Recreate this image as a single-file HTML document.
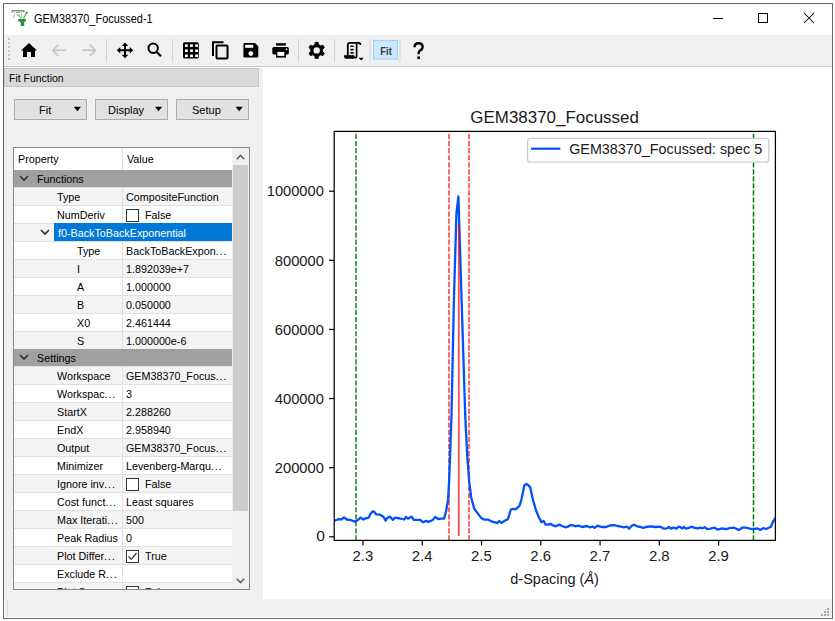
<!DOCTYPE html>
<html><head><meta charset="utf-8"><style>
*{margin:0;padding:0;box-sizing:border-box}
html,body{width:835px;height:621px;overflow:hidden;background:#fff;font-family:"Liberation Sans",sans-serif;}
.a{position:absolute}
#win{position:absolute;left:3px;top:3px;width:830px;height:616px;border:1px solid #686868;background:#f0f0f0}
#title{position:absolute;left:4px;top:4px;width:828px;height:31px;background:#fff}
#ttext{position:absolute;left:34px;top:10px;font-size:12px;line-height:18px;color:#000;white-space:nowrap;transform:scaleX(0.912);transform-origin:0 0}
.tb{position:absolute;background:#000}
#hdr{position:absolute;left:4px;top:68px;width:255px;height:19px;background:#dadada;border:1px solid #c6c6c6}
#hdrt{position:absolute;left:9px;top:69px;font-size:11px;line-height:18px;white-space:nowrap;transform:scaleX(0.95);transform-origin:0 0}
.btn{position:absolute;top:99px;width:73px;height:21px;background:#e1e1e1;border:1px solid #adadad}
.btnt{position:absolute;top:101px;font-size:11px;line-height:19px;white-space:nowrap}
.tri{position:absolute;width:0;height:0;border-left:3.6px solid transparent;border-right:3.6px solid transparent;border-top:3.7px solid #000}
#tree{position:absolute;left:13px;top:147px;width:237px;height:443px;border:1px solid #828790;background:#fff;overflow:hidden}
#tv{position:absolute;left:0;top:0;width:218px;height:441px;overflow:hidden}
.row{position:absolute;left:0;width:218px;height:18px;border-top:1px solid #e0e0e0}
.grp{position:absolute;left:0;width:218px;height:17px;background:#a0a0a0}
.sel{position:absolute;left:40px;width:178px;height:18px;background:#0078d7}
.t{position:absolute;font-size:11.5px;line-height:18px;white-space:nowrap;color:#000;transform:scaleX(0.935);transform-origin:0 0}
.chev{position:absolute}
.cb{position:absolute}
#coldiv{position:absolute;left:108px;top:0;width:1px;height:441px;background:#e0e0e0}
#sb{position:absolute;left:218px;top:0;width:17px;height:441px;background:#f0f0f0}
#thumb{position:absolute;left:1px;top:17px;width:15px;height:346px;background:#cdcdcd}
#canvas{position:absolute;left:263px;top:67px;width:569px;height:532px;background:#fff}
#status{position:absolute;left:4px;top:599px;width:828px;height:19px;background:#f0f0f0}
.tk{font-family:"Liberation Sans",sans-serif;font-size:14.2px;fill:#1a1a1a}
.ttl{font-family:"Liberation Sans",sans-serif;font-size:17px;fill:#1a1a1a}
.fitt{font-family:"Liberation Sans",sans-serif;font-size:11px;font-weight:bold;fill:#3a3a3a}
.help{font-family:"Liberation Sans",sans-serif;font-size:22px;font-weight:bold;fill:#000}
</style></head><body>
<div id="win"></div>
<div id="title"></div>
<svg class="a" style="left:10px;top:8px" width="20" height="20" viewBox="10 8 20 20">
<path d="M12.3 12.5 L12.3 10.8 L23.8 10.8 L23.8 12.5" stroke="#8c8c8c" stroke-width="1.4" fill="none"/>
<path d="M16 12.4 L19.8 12.4" stroke="#9a9a9a" stroke-width="1"/>
<path d="M14.3 12 L14.3 13.3 M21.6 12 L21.6 13.3" stroke="#aaa" stroke-width="0.9"/>
<path d="M14.8 14.2 Q13.3 15.5 13.6 17.6 M21.4 14.2 L22.2 17.6" stroke="#b0b0b0" stroke-width="1.1" fill="none"/>
<path d="M16.8 14.3 Q19.6 15.3 21.2 18.5" stroke="#58b058" stroke-width="1.1" fill="none"/>
<path d="M27.6 12.2 Q25 14 23.6 18.5" stroke="#4aa64a" stroke-width="1.2" fill="none"/>
<ellipse cx="26.6" cy="12.6" rx="1.2" ry="0.8" fill="#3c9c3c"/>
<path d="M18 19.1 L26.1 19.1 L25.6 21.4 L24.2 22 L24.2 26 L20.7 26 L20.7 22 L18.6 21.4 Z" fill="#2f8c3c"/>
</svg>
<div id="ttext">GEM38370_Focussed-1</div>
<svg class="a" style="left:700px;top:8px" width="125" height="20" viewBox="700 8 125 20">
<path d="M713 18.5 L723 18.5" stroke="#000" stroke-width="1"/>
<rect x="758.5" y="13.5" width="9" height="9" fill="none" stroke="#000" stroke-width="1"/>
<path d="M804 13 L814 23 M814 13 L804 23" stroke="#000" stroke-width="1.05"/>
</svg>
<svg style="position:absolute;left:4px;top:35px" width="827" height="31" viewBox="4 35 827 31">
<rect x="8" y="38" width="2" height="2" fill="#c4c4c4"/>
<rect x="8" y="42" width="2" height="2" fill="#c4c4c4"/>
<rect x="8" y="46" width="2" height="2" fill="#c4c4c4"/>
<rect x="8" y="50" width="2" height="2" fill="#c4c4c4"/>
<rect x="8" y="54" width="2" height="2" fill="#c4c4c4"/>
<rect x="8" y="58" width="2" height="2" fill="#c4c4c4"/>
<path d="M29 43 L37 50.5 L35 50.5 L35 57 L31 57 L31 52 L27 52 L27 57 L23 57 L23 50.5 L21 50.5 Z" fill="#000"/>
<path d="M66 50.3 L53 50.3 M58.5 44.5 L52.7 50.3 L58.5 56.1" fill="none" stroke="#c3c3c3" stroke-width="1.5"/>
<path d="M82 50.3 L95 50.3 M89.5 44.5 L95.3 50.3 L89.5 56.1" fill="none" stroke="#c3c3c3" stroke-width="1.5"/>
<line x1="106.5" y1="39" x2="106.5" y2="62" stroke="#d4d4d4" stroke-width="1"/>
<line x1="172.5" y1="39" x2="172.5" y2="62" stroke="#d4d4d4" stroke-width="1"/>
<line x1="298.5" y1="39" x2="298.5" y2="62" stroke="#d4d4d4" stroke-width="1"/>
<line x1="334.5" y1="39" x2="334.5" y2="62" stroke="#d4d4d4" stroke-width="1"/>
<line x1="370" y1="39" x2="370" y2="62" stroke="#d4d4d4" stroke-width="1"/>
<line x1="400" y1="39" x2="400" y2="62" stroke="#d4d4d4" stroke-width="1"/>
<path d="M125 51 M125 45 L125 56 M119.5 50.3 L130.5 50.3" stroke="#000" stroke-width="2" fill="none"/>
<path d="M125 42.5 L128.3 46 L121.7 46 Z M125 58.2 L128.3 54.7 L121.7 54.7 Z M116.8 50.3 L120.3 47 L120.3 53.6 Z M133.2 50.3 L129.7 47 L129.7 53.6 Z" fill="#000"/>
<circle cx="153.2" cy="48.3" r="4.7" fill="none" stroke="#000" stroke-width="2"/><path d="M156.5 51.8 L161 56.3" stroke="#000" stroke-width="2.2"/>
<rect x="183" y="42.2" width="15.8" height="16.4" rx="1.5" fill="#000"/>
<rect x="185.0" y="44.3" width="2.8" height="2.6" fill="#fff"/>
<rect x="185.0" y="49.4" width="2.8" height="2.6" fill="#fff"/>
<rect x="185.0" y="54.5" width="2.8" height="2.6" fill="#fff"/>
<rect x="190.1" y="44.3" width="2.8" height="2.6" fill="#fff"/>
<rect x="190.1" y="49.4" width="2.8" height="2.6" fill="#fff"/>
<rect x="190.1" y="54.5" width="2.8" height="2.6" fill="#fff"/>
<rect x="195.2" y="44.3" width="2.8" height="2.6" fill="#fff"/>
<rect x="195.2" y="49.4" width="2.8" height="2.6" fill="#fff"/>
<rect x="195.2" y="54.5" width="2.8" height="2.6" fill="#fff"/>
<path d="M213 56 L213 42.3 L223.5 42.3" fill="none" stroke="#000" stroke-width="2"/>
<rect x="216.5" y="45.5" width="11" height="13" rx="1" fill="none" stroke="#000" stroke-width="2"/>
<path d="M244.5 43 L255 43 L258.3 46.3 L258.3 56.5 Q258.3 57.6 257.2 57.6 L244.5 57.6 Q243.4 57.6 243.4 56.5 L243.4 44.1 Q243.4 43 244.5 43 Z" fill="#000"/>
<rect x="245.2" y="44.8" width="8" height="3" fill="#fff"/><circle cx="250.8" cy="53.6" r="2.4" fill="#fff"/>
<rect x="276" y="43.2" width="9.8" height="2.4" fill="#000"/>
<rect x="272.3" y="47" width="16.5" height="7.4" rx="1.5" fill="#000"/>
<rect x="276" y="50.5" width="10" height="7.1" fill="#000"/><rect x="277.4" y="51.9" width="6.9" height="4" fill="#fff"/><circle cx="286.4" cy="49.4" r="0.8" fill="#fff"/>
<path d="M314.95 44.66 L315.14 42.35 L318.26 42.35 L318.45 44.66 L319.70 45.20 L320.79 46.01 L322.89 45.02 L324.45 47.73 L322.55 49.05 L322.70 50.40 L322.55 51.75 L324.45 53.07 L322.89 55.78 L320.79 54.79 L319.70 55.60 L318.45 56.14 L318.26 58.45 L315.14 58.45 L314.95 56.14 L313.70 55.60 L312.61 54.79 L310.51 55.78 L308.95 53.07 L310.85 51.75 L310.70 50.40 L310.85 49.05 L308.95 47.73 L310.51 45.02 L312.61 46.01 L313.70 45.20 Z" fill="#000" stroke="#000" stroke-width="0.8" stroke-linejoin="round"/><circle cx="316.7" cy="50.4" r="3.2" fill="#f0f0f0"/>
<path d="M347.8 55 L347.8 45 Q347.8 42.8 350 42.8 L358.5 42.8 Q360.5 42.8 360.5 45" fill="none" stroke="#000" stroke-width="1.8"/>
<path d="M356.6 43.5 L356.6 56 Q356.6 57.7 354.8 57.7 L346 57.7 Q345 57.7 345 56.8 L345 56.2 L354 56.2" fill="none" stroke="#000" stroke-width="1.7"/>
<rect x="344.6" y="55.6" width="10" height="3" rx="1" fill="#000"/>
<rect x="350.2" y="45.5" width="3.6" height="1.6" rx="0.8" fill="#000"/>
<rect x="350.2" y="48.8" width="3.6" height="1.6" rx="0.8" fill="#000"/>
<rect x="350.2" y="52.099999999999994" width="3.6" height="1.6" rx="0.8" fill="#000"/>
<path d="M358.5 57.8 L363.8 57.8 L361.15 60.6 Z" fill="#000"/>
<rect x="373.5" y="40.5" width="24" height="18.5" fill="#cce8ff" stroke="#99d1ff" stroke-width="1"/>
<text x="380.3" y="55" class="fitt" textLength="11.6" lengthAdjust="spacingAndGlyphs">Fit</text>
<path d="M414.6 47.2 Q414.6 43.3 418.6 43.3 Q422.6 43.3 422.6 47 Q422.6 49.2 420.3 50.4 Q418.6 51.4 418.6 53.4 L418.6 54.2" fill="none" stroke="#000" stroke-width="2.4"/><rect x="417.3" y="56.4" width="2.7" height="2.7" fill="#000"/>
</svg>
<div class="a" style="left:4px;top:66px;width:828px;height:1px;background:#c8c8c8"></div>
<div class="a" style="left:4px;top:67px;width:828px;height:1px;background:#ffffff"></div>
<div id="hdr"></div>
<div id="hdrt">Fit Function</div>
<div class="btn" style="left:14px"></div><div class="btnt" style="left:39px">Fit</div><svg class="a" style="left:0;top:0" width="260" height="130"><path d="M73.8 106.8 L81.0 106.8 L77.39999999999999 111.2 Z" fill="#000"/></svg>
<div class="btn" style="left:95px"></div><div class="btnt" style="left:108px">Display</div><svg class="a" style="left:0;top:0" width="260" height="130"><path d="M155.0 106.8 L162.2 106.8 L158.6 111.2 Z" fill="#000"/></svg>
<div class="btn" style="left:176px"></div><div class="btnt" style="left:192px">Setup</div><svg class="a" style="left:0;top:0" width="260" height="130"><path d="M235.6 106.8 L242.79999999999998 106.8 L239.2 111.2 Z" fill="#000"/></svg>
<div id="tree">
<div id="tv">
<div class="t" style="left:4px;top:2px">Property</div>
<div class="t" style="left:113px;top:2px">Value</div><div class="a" style="left:108px;top:0;width:1px;height:22px;background:#e0e0e0"></div>
<div class="grp" style="top:22px"></div>
<svg class="chev" style="left:5px;top:27px" width="10" height="7" viewBox="0 0 10 7"><path d="M1 1 L5 5 L9 1" fill="none" stroke="#303030" stroke-width="1.6"/></svg>
<div class="t" style="left:23px;top:22px">Functions</div>
<div class="row" style="top:39px;background:#f4f4f4"></div>
<div class="a" style="left:108px;top:39px;width:1px;height:18px;background:#e0e0e0"></div>
<div class="t" style="left:43px;top:40px">Type</div>
<div class="t" style="left:112px;top:40px">CompositeFunction</div>
<div class="row" style="top:57px;background:#ffffff"></div>
<div class="a" style="left:108px;top:57px;width:1px;height:18px;background:#e0e0e0"></div>
<div class="t" style="left:43px;top:58px">NumDeriv</div>
<svg class="cb" style="left:112px;top:61px" width="13" height="13" viewBox="0 0 13 13"><rect x="0.5" y="0.5" width="12" height="12" fill="#fff" stroke="#333"/></svg>
<div class="t" style="left:131px;top:58px">False</div>
<div class="row" style="top:75px;background:#f4f4f4"></div>
<div class="sel" style="top:75px"></div>
<svg class="chev" style="left:26px;top:81px" width="10" height="7" viewBox="0 0 10 7"><path d="M1 1 L5 5 L9 1" fill="none" stroke="#303030" stroke-width="1.6"/></svg>
<div class="t" style="left:44px;top:76px;color:#fff">f0-BackToBackExponential</div>
<div class="row" style="top:93px;background:#ffffff"></div>
<div class="a" style="left:108px;top:93px;width:1px;height:18px;background:#e0e0e0"></div>
<div class="t" style="left:63px;top:94px">Type</div>
<div class="t" style="left:112px;top:94px">BackToBackExpon<span style="letter-spacing:0.9px">...</span></div>
<div class="row" style="top:111px;background:#f4f4f4"></div>
<div class="a" style="left:108px;top:111px;width:1px;height:18px;background:#e0e0e0"></div>
<div class="t" style="left:63px;top:112px">I</div>
<div class="t" style="left:112px;top:112px">1.892039e+7</div>
<div class="row" style="top:129px;background:#ffffff"></div>
<div class="a" style="left:108px;top:129px;width:1px;height:18px;background:#e0e0e0"></div>
<div class="t" style="left:63px;top:130px">A</div>
<div class="t" style="left:112px;top:130px">1.000000</div>
<div class="row" style="top:147px;background:#f4f4f4"></div>
<div class="a" style="left:108px;top:147px;width:1px;height:18px;background:#e0e0e0"></div>
<div class="t" style="left:63px;top:148px">B</div>
<div class="t" style="left:112px;top:148px">0.050000</div>
<div class="row" style="top:165px;background:#ffffff"></div>
<div class="a" style="left:108px;top:165px;width:1px;height:18px;background:#e0e0e0"></div>
<div class="t" style="left:63px;top:166px">X0</div>
<div class="t" style="left:112px;top:166px">2.461444</div>
<div class="row" style="top:183px;background:#f4f4f4"></div>
<div class="a" style="left:108px;top:183px;width:1px;height:18px;background:#e0e0e0"></div>
<div class="t" style="left:63px;top:184px">S</div>
<div class="t" style="left:112px;top:184px">1.000000e-6</div>
<div class="grp" style="top:201px"></div>
<svg class="chev" style="left:5px;top:206px" width="10" height="7" viewBox="0 0 10 7"><path d="M1 1 L5 5 L9 1" fill="none" stroke="#303030" stroke-width="1.6"/></svg>
<div class="t" style="left:23px;top:201px">Settings</div>
<div class="row" style="top:218px;background:#f4f4f4"></div>
<div class="a" style="left:108px;top:218px;width:1px;height:18px;background:#e0e0e0"></div>
<div class="t" style="left:43px;top:219px">Workspace</div>
<div class="t" style="left:112px;top:219px">GEM38370_Focus<span style="letter-spacing:0.9px">...</span></div>
<div class="row" style="top:236px;background:#ffffff"></div>
<div class="a" style="left:108px;top:236px;width:1px;height:18px;background:#e0e0e0"></div>
<div class="t" style="left:43px;top:237px">Workspac<span style="letter-spacing:0.9px">...</span></div>
<div class="t" style="left:112px;top:237px">3</div>
<div class="row" style="top:254px;background:#f4f4f4"></div>
<div class="a" style="left:108px;top:254px;width:1px;height:18px;background:#e0e0e0"></div>
<div class="t" style="left:43px;top:255px">StartX</div>
<div class="t" style="left:112px;top:255px">2.288260</div>
<div class="row" style="top:272px;background:#ffffff"></div>
<div class="a" style="left:108px;top:272px;width:1px;height:18px;background:#e0e0e0"></div>
<div class="t" style="left:43px;top:273px">EndX</div>
<div class="t" style="left:112px;top:273px">2.958940</div>
<div class="row" style="top:290px;background:#f4f4f4"></div>
<div class="a" style="left:108px;top:290px;width:1px;height:18px;background:#e0e0e0"></div>
<div class="t" style="left:43px;top:291px">Output</div>
<div class="t" style="left:112px;top:291px">GEM38370_Focus<span style="letter-spacing:0.9px">...</span></div>
<div class="row" style="top:308px;background:#ffffff"></div>
<div class="a" style="left:108px;top:308px;width:1px;height:18px;background:#e0e0e0"></div>
<div class="t" style="left:43px;top:309px">Minimizer</div>
<div class="t" style="left:112px;top:309px">Levenberg-Marqu<span style="letter-spacing:0.9px">...</span></div>
<div class="row" style="top:326px;background:#f4f4f4"></div>
<div class="a" style="left:108px;top:326px;width:1px;height:18px;background:#e0e0e0"></div>
<div class="t" style="left:43px;top:327px">Ignore inv<span style="letter-spacing:0.9px">...</span></div>
<svg class="cb" style="left:112px;top:330px" width="13" height="13" viewBox="0 0 13 13"><rect x="0.5" y="0.5" width="12" height="12" fill="#fff" stroke="#333"/></svg>
<div class="t" style="left:131px;top:327px">False</div>
<div class="row" style="top:344px;background:#ffffff"></div>
<div class="a" style="left:108px;top:344px;width:1px;height:18px;background:#e0e0e0"></div>
<div class="t" style="left:43px;top:345px">Cost funct<span style="letter-spacing:0.9px">...</span></div>
<div class="t" style="left:112px;top:345px">Least squares</div>
<div class="row" style="top:362px;background:#f4f4f4"></div>
<div class="a" style="left:108px;top:362px;width:1px;height:18px;background:#e0e0e0"></div>
<div class="t" style="left:43px;top:363px">Max Iterati<span style="letter-spacing:0.9px">...</span></div>
<div class="t" style="left:112px;top:363px">500</div>
<div class="row" style="top:380px;background:#ffffff"></div>
<div class="a" style="left:108px;top:380px;width:1px;height:18px;background:#e0e0e0"></div>
<div class="t" style="left:43px;top:381px">Peak Radius</div>
<div class="t" style="left:112px;top:381px">0</div>
<div class="row" style="top:398px;background:#f4f4f4"></div>
<div class="a" style="left:108px;top:398px;width:1px;height:18px;background:#e0e0e0"></div>
<div class="t" style="left:43px;top:399px">Plot Differ<span style="letter-spacing:0.9px">...</span></div>
<svg class="cb" style="left:112px;top:402px" width="13" height="13" viewBox="0 0 13 13"><rect x="0.5" y="0.5" width="12" height="12" fill="#fff" stroke="#333"/><path d="M2.5 6.5 L5.2 9.3 L10.5 3" fill="none" stroke="#333" stroke-width="1.2"/></svg>
<div class="t" style="left:131px;top:399px">True</div>
<div class="row" style="top:416px;background:#ffffff"></div>
<div class="a" style="left:108px;top:416px;width:1px;height:18px;background:#e0e0e0"></div>
<div class="t" style="left:43px;top:417px">Exclude R<span style="letter-spacing:0.9px">...</span></div>
<div class="t" style="left:112px;top:417px"></div>
<div class="row" style="top:434px;background:#f4f4f4"></div>
<div class="a" style="left:108px;top:434px;width:1px;height:18px;background:#e0e0e0"></div>
<div class="t" style="left:43px;top:435px">Plot Sepa<span style="letter-spacing:0.9px">...</span></div>
<svg class="cb" style="left:112px;top:438px" width="13" height="13" viewBox="0 0 13 13"><rect x="0.5" y="0.5" width="12" height="12" fill="#fff" stroke="#333"/></svg>
<div class="t" style="left:131px;top:435px">False</div>

</div>
<div id="sb"><div id="thumb"></div>
<svg class="a" style="left:4px;top:6px" width="9" height="6" viewBox="0 0 9 6"><path d="M0.8 5.2 L4.5 1.5 L8.2 5.2" fill="none" stroke="#606060" stroke-width="1.6"/></svg>
<svg class="a" style="left:4px;top:430px" width="9" height="6" viewBox="0 0 9 6"><path d="M0.8 0.8 L4.5 4.5 L8.2 0.8" fill="none" stroke="#606060" stroke-width="1.6"/></svg>
</div>
</div>
<div id="canvas"></div>
<svg style="position:absolute;left:263px;top:67px" width="569" height="532" viewBox="263 67 569 532">
<defs><clipPath id="ax"><rect x="334" y="131" width="442" height="410"/></clipPath></defs>
<g clip-path="url(#ax)">
<line x1="356" y1="540.5" x2="356" y2="131" stroke="#008000" stroke-opacity="0.7" stroke-width="2" stroke-dasharray="5.2 1.84"/>
<line x1="753.5" y1="540.5" x2="753.5" y2="131" stroke="#008000" stroke-opacity="1" stroke-width="1.5" stroke-dasharray="5.2 1.84"/>
<line x1="449" y1="540.5" x2="449" y2="131" stroke="#ff0000" stroke-opacity="0.7" stroke-width="1.7" stroke-dasharray="5.2 1.84"/>
<line x1="469" y1="540.5" x2="469" y2="131" stroke="#ff0000" stroke-opacity="0.7" stroke-width="1.7" stroke-dasharray="5.2 1.84"/>
<polyline points="334,520.9 338.3,519.2 341.2,519.5 344.1,517.3 346.9,519.5 351.2,520.2 354.8,521.6 357.7,520.2 360.6,517.7 363.5,519.5 365.6,518.3 368.5,517.7 370.6,513.7 372.8,511.3 374.2,511.6 376.1,514.4 380,514.7 382.1,515.9 383.6,517 385.5,520.5 387.2,518 390,516.6 392.9,519.9 395.1,517.6 400.1,518.5 404.4,519.5 405.9,516.9 408,518.7 411.6,516.6 413.8,519.9 420.2,519.9 423.1,522.3 426,520.9 428.1,521.9 432.4,520.2 435.3,517 438.2,519 441.1,518.7 444,518.7 446,511.6 448.1,499.6 449.1,481.4 450.1,455.3 451.5,415 453.9,300 456.4,214 458.4,196.4 461.6,300 465.2,415 467.2,455.3 469.2,481.4 471.2,497.5 474.2,508.6 477.2,512.6 481.3,518.1 484.3,519.7 488.3,519.7 492.3,521.7 497.4,523.1 499.3,521 501.5,522.9 504.4,521 508,518.9 510.8,509.5 513.7,508.8 515.9,509.1 519.5,505.9 521.6,498.7 524.5,485.1 526.6,483.9 530.2,487.2 533.1,500.2 536,510.2 538.9,517.4 540,519.3 541.4,522.2 542.4,521.7 543.8,521.2 545.7,524.6 548.1,524.6 550.5,523.8 552.9,525.3 555.8,526.3 559.2,524.6 562,526 565.4,527.3 567.8,526.7 570.2,525.1 573,525.3 575.4,526.3 578.3,525.7 582.1,527 586.9,526 589.8,527.3 592.7,526.7 594.6,527.9 597.5,525.7 601.3,527 606.1,527 609.9,525.5 614.2,525.1 617.6,526 620,526.3 623.8,527.3 626.7,526.7 629.1,528.6 631.5,526 633.9,524.8 637.2,526.3 640.6,527 643.5,527.9 645.9,527 650.7,526.3 655.4,527 660.2,526.7 663.6,528.6 666.9,528.4 668.9,527 670.8,528.6 673.2,527.6 676.5,528.6 678.4,526.7 680.8,527.3 682.3,528.6 683.7,527 686.1,528.6 689,527.9 691.4,526.7 694.7,527.9 697.6,528.4 700,527.7 702.4,528.2 704.8,527.2 707.2,529.2 710.5,528.7 714.4,527.7 717.7,529.6 722,528.4 725.9,529.2 729.7,528.2 734,527.7 736.4,528.7 738.8,530.1 742.1,527.7 746,527.7 749.8,528.7 753.6,529 757.5,528.4 760.3,529.9 763.2,528.2 766.1,529 770.9,526.8 772.8,522 774.7,519.1 777,516" fill="none" stroke="#0050ff" stroke-width="2.3" stroke-linejoin="round"/>
<line x1="458.8" y1="536" x2="458.8" y2="225" stroke="#ff0000" stroke-opacity="0.7" stroke-width="1.8"/>
</g>
<rect x="334.2" y="131.4" width="441.2" height="409" fill="none" stroke="#000" stroke-width="1.25"/>
<line x1="363.00" y1="541" x2="363.00" y2="545.5" stroke="#000" stroke-width="1.2"/>
<text x="362.90" y="561" text-anchor="middle" class="tk" textLength="20.7" lengthAdjust="spacingAndGlyphs">2.3</text>
<line x1="422.27" y1="541" x2="422.27" y2="545.5" stroke="#000" stroke-width="1.2"/>
<text x="422.17" y="561" text-anchor="middle" class="tk" textLength="20.7" lengthAdjust="spacingAndGlyphs">2.4</text>
<line x1="481.54" y1="541" x2="481.54" y2="545.5" stroke="#000" stroke-width="1.2"/>
<text x="481.44" y="561" text-anchor="middle" class="tk" textLength="20.7" lengthAdjust="spacingAndGlyphs">2.5</text>
<line x1="540.81" y1="541" x2="540.81" y2="545.5" stroke="#000" stroke-width="1.2"/>
<text x="540.71" y="561" text-anchor="middle" class="tk" textLength="20.7" lengthAdjust="spacingAndGlyphs">2.6</text>
<line x1="600.08" y1="541" x2="600.08" y2="545.5" stroke="#000" stroke-width="1.2"/>
<text x="599.98" y="561" text-anchor="middle" class="tk" textLength="20.7" lengthAdjust="spacingAndGlyphs">2.7</text>
<line x1="659.35" y1="541" x2="659.35" y2="545.5" stroke="#000" stroke-width="1.2"/>
<text x="659.25" y="561" text-anchor="middle" class="tk" textLength="20.7" lengthAdjust="spacingAndGlyphs">2.8</text>
<line x1="718.62" y1="541" x2="718.62" y2="545.5" stroke="#000" stroke-width="1.2"/>
<text x="718.52" y="561" text-anchor="middle" class="tk" textLength="20.7" lengthAdjust="spacingAndGlyphs">2.9</text>
<line x1="329" y1="536.80" x2="334" y2="536.80" stroke="#000" stroke-width="1.2"/>
<text x="324.90" y="541.10" text-anchor="end" class="tk" textLength="8.66" lengthAdjust="spacingAndGlyphs">0</text>
<line x1="329" y1="467.68" x2="334" y2="467.68" stroke="#000" stroke-width="1.2"/>
<text x="323.80" y="472.88" text-anchor="end" class="tk" textLength="48.96" lengthAdjust="spacingAndGlyphs">200000</text>
<line x1="329" y1="398.56" x2="334" y2="398.56" stroke="#000" stroke-width="1.2"/>
<text x="323.80" y="403.76" text-anchor="end" class="tk" textLength="48.96" lengthAdjust="spacingAndGlyphs">400000</text>
<line x1="329" y1="329.44" x2="334" y2="329.44" stroke="#000" stroke-width="1.2"/>
<text x="323.80" y="334.64" text-anchor="end" class="tk" textLength="48.96" lengthAdjust="spacingAndGlyphs">600000</text>
<line x1="329" y1="260.32" x2="334" y2="260.32" stroke="#000" stroke-width="1.2"/>
<text x="323.80" y="265.52" text-anchor="end" class="tk" textLength="48.96" lengthAdjust="spacingAndGlyphs">800000</text>
<line x1="329" y1="191.20" x2="334" y2="191.20" stroke="#000" stroke-width="1.2"/>
<text x="323.80" y="196.40" text-anchor="end" class="tk" textLength="57.02" lengthAdjust="spacingAndGlyphs">1000000</text>
<text x="554.6" y="122.8" text-anchor="middle" class="ttl" textLength="168.6" lengthAdjust="spacingAndGlyphs">GEM38370_Focussed</text>
<text x="554.6" y="583.7" text-anchor="middle" class="tk" textLength="88.7" lengthAdjust="spacingAndGlyphs">d-Spacing (<tspan font-style="italic">Å</tspan>)</text>
<rect x="527.6" y="138.4" width="241.2" height="23.8" rx="2.8" fill="#fff" fill-opacity="0.88" stroke="#cccccc" stroke-width="1.3"/>
<line x1="531" y1="148.7" x2="560.3" y2="148.7" stroke="#0050ff" stroke-width="2.2"/>
<text x="569.2" y="153.5" class="tk" textLength="193" lengthAdjust="spacingAndGlyphs">GEM38370_Focussed: spec 5</text>
</svg>
<div id="status"></div>
<div class="a" style="left:4px;top:599px;width:1px;height:19px;background:#fff"></div>
<div class="a" style="left:4px;top:617px;width:828px;height:1px;background:#fff"></div>
<div class="a" style="left:7px;top:601px;width:1px;height:15px;background:#d8d8d8"></div>
<svg class="a" style="left:819px;top:605px" width="12" height="12" viewBox="819 605 12 12">
<rect x="827" y="608" width="2" height="2" fill="#a8a8a8"/>
<rect x="824" y="611" width="2" height="2" fill="#a8a8a8"/><rect x="827" y="611" width="2" height="2" fill="#a8a8a8"/>
<rect x="821" y="614" width="2" height="2" fill="#a8a8a8"/><rect x="824" y="614" width="2" height="2" fill="#a8a8a8"/><rect x="827" y="614" width="2" height="2" fill="#a8a8a8"/>
</svg>
</body></html>
